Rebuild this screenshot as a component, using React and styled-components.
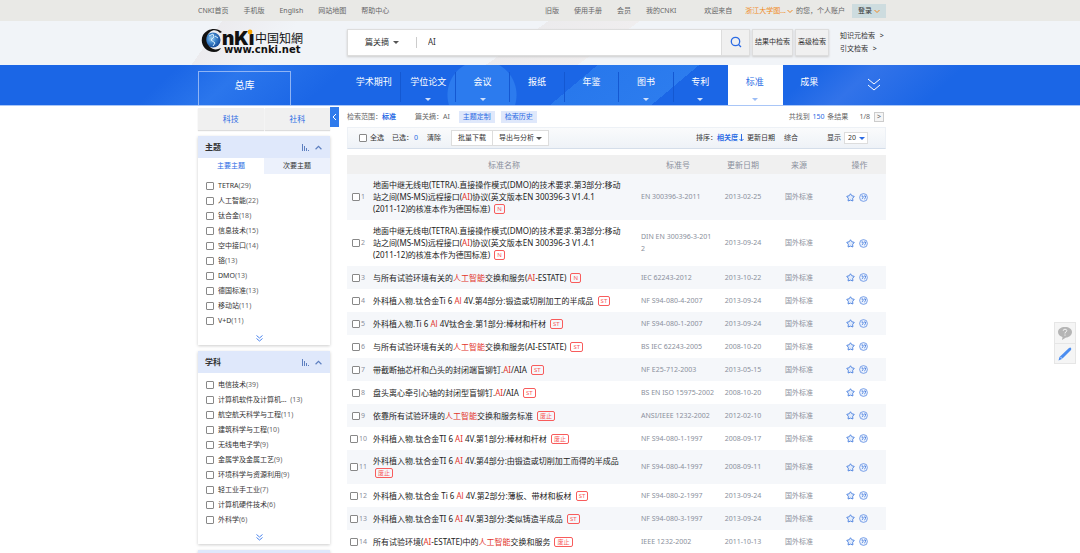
import { useState } from "react";
import styled, { createGlobalStyle } from "styled-components";

const colors = {
  blue: "#2b6be4",
  nav: "#1b66e6",
  red: "#e2342b",
  badge: "#f85c5c",
  text: "#333",
  gray: "#666",
  muted: "#8a8f9c",
  stripe: "#f5f7fa",
  panel: "#dfe8fb",
};

const themes = [
  ["TETRA", 29],
  ["人工智能", 22],
  ["钛合金", 18],
  ["信息技术", 15],
  ["空中接口", 14],
  ["铬", 13],
  ["DMO", 13],
  ["德国标准", 13],
  ["移动站", 11],
  ["V+D", 11],
];

const subjects = [
  ["电信技术", 39],
  ["计算机软件及计算机…  ", 13],
  ["航空航天科学与工程", 11],
  ["建筑科学与工程", 10],
  ["无线电电子学", 9],
  ["金属学及金属工艺", 9],
  ["环境科学与资源利用", 9],
  ["轻工业手工业", 7],
  ["计算机硬件技术", 6],
  ["外科学", 6],
];

const navItems = [
  { label: "学术期刊" },
  { label: "学位论文", arrow: true },
  { label: "会议", arrow: true },
  { label: "报纸" },
  { label: "年鉴" },
  { label: "图书", arrow: true },
  { label: "专利", arrow: true },
  { label: "标准", arrow: true, active: true },
  { label: "成果" },
];

// Parts wrapped in asterisks are the matched keywords
const results = [
  {
    title:
      "地面中继无线电(TETRA).直接操作模式(DMO)的技术要求.第3部分:移动站之间(MS-MS)远程接口(*AI*)协议(英文版本EN 300396-3 V1.4.1 (2011-12)的核准本作为德国标准)",
    tag: "N",
    code: "EN 300396-3-2011",
    date: "2013-02-25",
  },
  {
    title:
      "地面中继无线电(TETRA).直接操作模式(DMO)的技术要求.第3部分:移动站之间(MS-MS)远程接口(*AI*)协议(英文版本EN 300396-3 V1.4.1 (2011-12)的核准本作为德国标准)",
    tag: "N",
    code: "DIN EN 300396-3-2012",
    date: "2013-09-24",
  },
  {
    title: "与所有试验环境有关的*人工智能*交换和服务(*AI*-ESTATE)",
    tag: "N",
    code: "IEC 62243-2012",
    date: "2013-10-22",
  },
  {
    title: "外科植入物.钛合金Ti 6 *Al* 4V.第4部分:锻造或切削加工的半成品",
    tag: "ST",
    code: "NF S94-080-4-2007",
    date: "2013-09-24",
  },
  {
    title: "外科植入物.Ti 6 *Al* 4V钛合金.第1部分:棒材和杆材",
    tag: "ST",
    code: "NF S94-080-1-2007",
    date: "2013-09-24",
  },
  {
    title: "与所有试验环境有关的*人工智能*交换和服务(AI-ESTATE)",
    tag: "ST",
    code: "BS IEC 62243-2005",
    date: "2008-10-20",
  },
  {
    title: "带截断抽芯杆和凸头的封闭端盲铆钉.*AI*/AIA",
    tag: "ST",
    code: "NF E25-712-2003",
    date: "2013-05-15",
  },
  {
    title: "盘头离心牵引心轴的封闭型盲铆钉.*AI*/AIA",
    tag: "ST",
    code: "BS EN ISO 15975-2002",
    date: "2008-10-20",
  },
  {
    title: "依靠所有试验环境的*人工智能*交换和服务标准",
    tag: "废止",
    code: "ANSI/IEEE 1232-2002",
    date: "2012-02-10",
  },
  {
    title: "外科植入物.钛合金TI 6 *AI* 4V.第1部分:棒材和杆材",
    tag: "废止",
    code: "NF S94-080-1-1997",
    date: "2008-09-17",
  },
  {
    title: "外科植入物.钛合金TI 6 *AI* 4V.第4部分:由锻造或切削加工而得的半成品",
    tag: "废止",
    code: "NF S94-080-4-1997",
    date: "2008-09-11",
  },
  {
    title: "外科植入物.钛合金 Ti 6 *Al* 4V.第2部分:薄板、带材和板材",
    tag: "ST",
    code: "NF S94-080-2-1997",
    date: "2013-09-24",
  },
  {
    title: "外科植入物.钛合金TI 6 *AI* 4V.第3部分:类似铸造半成品",
    tag: "ST",
    code: "NF S94-080-3-1997",
    date: "2013-09-24",
  },
  {
    title: "所有试验环境(*AI*-ESTATE)中的*人工智能*交换和服务",
    tag: "废止",
    code: "IEEE 1232-2002",
    date: "2011-10-13",
  },
];

function Logo() {
  return (
    <svg width="106" height="28" viewBox="0 0 106 28" role="img" aria-label="中国知网">
      <defs>
        <radialGradient id="globe" cx="0.4" cy="0.4" r="0.6">
          <stop offset="0" stopColor="#9fd0f2" />
          <stop offset="0.5" stopColor="#3f86cc" />
          <stop offset="1" stopColor="#174d9c" />
        </radialGradient>
      </defs>
      <circle cx="13" cy="12" r="7.5" fill="url(#globe)" />
      <path d="M9 8l4-2 1 3-3 3 4 3-2 3M15 8l3 2" fill="none" stroke="#d7edfb" strokeWidth="1" />
      <path
        d="M22 4C17-1 7 0 3 7c-4 8 2 17 11 17 4 0 6-2 7-4-4 2-8 2-11-1-5-4-5-11 0-15 3-3 8-2 10 1z"
        fill="#111"
      />
      <text x="22" y="17" fontFamily="Inter, sans-serif" fontWeight="900" fontSize="19" fill="#111">
        nKı
      </text>
      <circle cx="50" cy="4" r="2.4" fill="#f7a400" />
      <text x="55" y="15" fontFamily="'Noto Sans CJK TC', sans-serif" fontSize="12" fill="#111">
        中国知網
      </text>
      <text x="24" y="25" fontFamily="'DejaVu Sans', sans-serif" fontWeight="700" fontSize="10" fill="#111">
        www.cnki.net
      </text>
    </svg>
  );
}

function Chevron({ up, size = 6, color = "currentColor" }) {
  return (
    <svg width={size} height={size} viewBox="0 0 6 6" fill="none" stroke={color}>
      <path d={up ? "M0.5 4.5L3 2l2.5 2.5" : "M0.5 2L3 4.5 5.5 2"} />
    </svg>
  );
}

function DoubleChevron({ width = 7, height = 7, stroke = 1.6 }) {
  return (
    <svg width={width} height={height} viewBox="0 0 14 14" fill="none" stroke="currentColor" strokeWidth={stroke}>
      <path d="M1 1l6 5 6-5M1 7l6 5 6-5" />
    </svg>
  );
}

function BarsIcon() {
  return (
    <svg width="8" height="7" viewBox="0 0 8 7" fill="#5d7fc0">
      <path d="M0 0h1v7H0zM2 2h1v5H2zM4 4h1v3H4zM6 6h1v1H6z" />
    </svg>
  );
}

function StarIcon() {
  return (
    <svg width="9" height="9" viewBox="0 0 18 18" fill="#e3ecfb" stroke="#4a80df" strokeWidth="1.8" strokeLinejoin="round">
      <path d="M9 1.5l2.6 4 4.9 1.2-3.1 3.9.3 5.4L9 14.2 4.3 16l.3-5.4L1.5 6.7l4.9-1.2z" />
    </svg>
  );
}

function QuoteIcon() {
  return (
    <svg width="9" height="9" viewBox="0 0 18 18" fill="#edf3fd" stroke="#4a80df">
      <circle cx="9" cy="9" r="7.8" strokeWidth="1.4" />
      <path d="M5 6h3v3q0 2-2.5 3M10 6h3v3q0 2-2.5 3" strokeWidth="1.8" />
    </svg>
  );
}

// Keeps a bracketed year and month such as (2011-12) on one line
function Title({ text }) {
  return text.split(/(\*[^*]+\*|\(\d{4}-\d{2}\))/).map((part, index) => {
    if (part.startsWith("*")) {
      return <Keyword key={index}>{part.slice(1, -1)}</Keyword>;
    }
    return index % 2 ? <NoWrap key={index}>{part}</NoWrap> : part;
  });
}

function FilterPanel({ title, items, tabs }) {
  return (
    <Panel>
      <PanelHeader>
        <h3>{title}</h3>
        <PanelTools>
          <IconButton aria-label="可视化">
            <BarsIcon />
          </IconButton>
          <IconButton aria-label="收起">
            <Chevron up size={7} color="#5d7fc0" />
          </IconButton>
        </PanelTools>
      </PanelHeader>
      {tabs && (
        <PanelTabs>
          <PanelTab $active>主要主题</PanelTab>
          <PanelTab>次要主题</PanelTab>
        </PanelTabs>
      )}
      <FilterList>
        {items.map(([name, count]) => (
          <li key={name}>
            <FilterLabel>
              <Checkbox type="checkbox" />
              <span>
                {name}
                <Count>({count})</Count>
              </span>
            </FilterLabel>
          </li>
        ))}
      </FilterList>
      <MoreButton aria-label="更多">
        <DoubleChevron stroke={2} />
      </MoreButton>
    </Panel>
  );
}

function App() {
  const [query, setQuery] = useState("AI");

  return (
    <Page>
      <GlobalStyle />
      <TopBar>
        <TopInner>
          <TopLinks>
            <a href="#home">CNKI首页</a>
            <a href="#mobile">手机版</a>
            <a href="#en">English</a>
            <a href="#map">网站地图</a>
            <a href="#help">帮助中心</a>
          </TopLinks>
          <TopLinks>
            <a href="#old">旧版</a>
            <a href="#manual">使用手册</a>
            <a href="#member">会员</a>
            <a href="#my">我的CNKI</a>
            <Welcome>
              <span>欢迎来自</span>
              <School href="#school">
                浙江大学图...
                <Chevron />
              </School>
              <span>的您，个人账户</span>
              <LoginButton>
                登录
                <Chevron color="#f08a24" />
              </LoginButton>
            </Welcome>
          </TopLinks>
        </TopInner>
      </TopBar>

      <Header>
        <HeaderInner>
          <LogoLink href="#home">
            <Logo />
          </LogoLink>
          <SearchBox>
            <FieldButton>
              篇关摘
              <Caret />
            </FieldButton>
            <SearchInput
              type="text"
              aria-label="检索词"
              value={query}
              onChange={(event) => setQuery(event.target.value)}
            />
            <SearchButton aria-label="检索">
              <svg width="12" height="12" viewBox="0 0 12 12" fill="none" stroke={colors.blue} strokeWidth="1.3">
                <circle cx="5.5" cy="5.5" r="4.2" />
                <path d="M8.5 8.5L11 11" />
              </svg>
            </SearchButton>
          </SearchBox>
          <HeaderButton>结果中检索</HeaderButton>
          <HeaderButton>高级检索</HeaderButton>
          <SideLinks>
            <a href="#knowledge">
              知识元检索 <span>&gt;</span>
            </a>
            <a href="#citation">
              引文检索 <span>&gt;</span>
            </a>
          </SideLinks>
        </HeaderInner>
      </Header>

      <Nav>
        <NavInner>
          <AllButton>总库</AllButton>
          <NavList>
            {navItems.map(({ label, arrow, active }) => (
              <NavItem key={label} href="#nav" $active={active}>
                {label}
                {arrow && <NavArrow $active={active} />}
              </NavItem>
            ))}
          </NavList>
          <NavMore aria-label="展开">
            <DoubleChevron width={14} height={14} stroke={1} />
          </NavMore>
        </NavInner>
      </Nav>

      <Main>
        <Sidebar>
          <Switches>
            <SwitchButton>科技</SwitchButton>
            <SwitchButton>社科</SwitchButton>
          </Switches>
          <FilterPanel title="主题" items={themes} tabs />
          <FilterPanel title="学科" items={subjects} />
          <Panel>
            <PanelHeader />
          </Panel>
        </Sidebar>
        <CollapseButton aria-label="收起侧栏">
          <svg width="5" height="8" viewBox="0 0 5 8" fill="none" stroke="#fff">
            <path d="M4 1L1 4l3 3" />
          </svg>
        </CollapseButton>

        <Content>
          <Summary>
            <span>
              检索范围：<Strong>标准</Strong>
            </span>
            <SummaryQuery>篇关摘：AI</SummaryQuery>
            <TagButton>主题定制</TagButton>
            <TagButton>检索历史</TagButton>
            <Total>
              共找到 <Blue>150</Blue> 条结果
            </Total>
            <span>1/8</span>
            <PageButton aria-label="下一页">&gt;</PageButton>
          </Summary>

          <Toolbar>
            <ToolGroup>
              <SelectAll>
                <Checkbox type="checkbox" />
                全选
              </SelectAll>
              <span>
                已选：<Blue>0</Blue>
              </span>
              <PlainButton>清除</PlainButton>
            </ToolGroup>
            <ButtonGroup>
              <ToolButton>批量下载</ToolButton>
              <ToolButton>
                导出与分析
                <Caret />
              </ToolButton>
            </ButtonGroup>
            <SortGroup>
              <span>排序：</span>
              <PlainButton $active>
                相关度
                <svg width="5" height="8" viewBox="0 0 5 8" fill="none" stroke="currentColor">
                  <path d="M2.5 0v7M0.5 5l2 2 2-2" />
                </svg>
              </PlainButton>
              <PlainButton>更新日期</PlainButton>
              <LastSort>综合</LastSort>
            </SortGroup>
            <PageSize>
              显示
              <SelectWrap>
                <select defaultValue="20">
                  <option>10</option>
                  <option>20</option>
                  <option>50</option>
                </select>
                <Caret $color={colors.blue} />
              </SelectWrap>
            </PageSize>
          </Toolbar>

          <Table>
            <colgroup>
              <col width="26" />
              <col />
              <col width="86" />
              <col width="44" />
              <col width="68" />
              <col width="53" />
            </colgroup>
            <thead>
              <tr>
                <th aria-label="序号" />
                <th>标准名称</th>
                <th>标准号</th>
                <th>更新日期</th>
                <th>来源</th>
                <th>操作</th>
              </tr>
            </thead>
            <tbody>
              {results.map((row, index) => (
                <tr key={index}>
                  <td>
                    <RowLabel>
                      <Checkbox type="checkbox" />
                      {index + 1}
                    </RowLabel>
                  </td>
                  <TitleCell>
                    <a href="#detail">
                      <Title text={row.title} />
                    </a>{" "}
                    <Badge>{row.tag}</Badge>
                  </TitleCell>
                  <CodeCell>{row.code}</CodeCell>
                  <td>{row.date}</td>
                  <td>国外标准</td>
                  <td>
                    <Actions>
                      <IconButton aria-label="收藏">
                        <StarIcon />
                      </IconButton>
                      <IconButton aria-label="引用">
                        <QuoteIcon />
                      </IconButton>
                    </Actions>
                  </td>
                </tr>
              ))}
            </tbody>
          </Table>
        </Content>
      </Main>

      <Floating>
        <FloatButton aria-label="帮助">
          <svg width="14" height="13" viewBox="0 0 14 13" fill="#b5b5b5">
            <path d="M7 0c4 0 7 2 7 5s-3 5.5-6 5.5L4 13l.5-3C2 9.5 0 7.5 0 5c0-3 3-5 7-5z" />
            <path d="M5.2 3.8q0-1.6 1.8-1.6t1.8 1.5q0 1-1.8 2v.8M7 7.5v1.2" fill="none" stroke="#f4f4f4" />
          </svg>
        </FloatButton>
        <FloatButton aria-label="反馈">
          <svg width="14" height="14" viewBox="0 0 14 14" fill="#4b8df0">
            <path d="M0.5 13.5l1-3.5L11 1q1.5-1 2 0t0 2L4 12z" />
            <path d="M2.5 10l2 2" stroke="#fff" strokeWidth="0.7" />
          </svg>
        </FloatButton>
      </Floating>
    </Page>
  );
}

const GlobalStyle = createGlobalStyle`
  * {
    box-sizing: border-box;
  }

  body {
    margin: 0;
    background: #fff;
    color: ${colors.text};
    font-family: "Noto Sans", "Noto Sans CJK SC", sans-serif;
    font-size: 7px;
    line-height: 12px;
  }

  a {
    color: inherit;
    text-decoration: none;
  }

  button, input, select {
    margin: 0;
    padding: 0;
    border: 0;
    background: none;
    color: inherit;
    font: inherit;
  }

  svg {
    display: block;
  }
`;

const Page = styled.div`
  height: 100vh;
  overflow: hidden;
`;

const Container = styled.div`
  display: flex;
  max-width: 692px;
  margin: 0 auto;
  padding-left: 4px;
`;

const TopBar = styled.div`
  background: #e9e9e6;
  color: ${colors.gray};
`;

const TopInner = styled(Container)`
  align-items: center;
  justify-content: space-between;
  height: 21px;
`;

const TopLinks = styled.div`
  display: flex;
  align-items: center;
  gap: 15px;
`;

const Welcome = styled.div`
  display: flex;
  align-items: center;
  gap: 3px;
  margin-left: 13px;
`;

const School = styled.a`
  display: flex;
  align-items: center;
  gap: 1px;
  margin-left: 10px;
  color: #f08a24;
`;

const LoginButton = styled.button`
  display: flex;
  align-items: center;
  justify-content: center;
  gap: 2px;
  width: 34px;
  height: 14px;
  margin-left: 4px;
  background: #cddcdf;
  color: ${colors.text};
`;

const Header = styled.header`
  background:
    linear-gradient(125deg, transparent 20%, #ecebee 20%, #f1f4f8 27%, transparent 27%),
    linear-gradient(145deg, transparent 48%, #ecebed 48%, #f0eeef 56%, transparent 56%),
    #f1f4f8;
`;

const HeaderInner = styled(Container)`
  align-items: center;
  height: 44px;
  padding-bottom: 2px;
`;

const LogoLink = styled.a`
  flex: 0 0 149px;
  padding-left: 2px;
`;

const SearchBox = styled.div`
  display: flex;
  flex: 0 1 403px;
  height: 27px;
  margin-right: 2px;
  border: 1px solid #ddd;
  background: #fff;
  box-shadow: 0 1px 2px #ccc;
`;

const FieldButton = styled.button`
  display: flex;
  align-items: center;
  justify-content: center;
  gap: 4px;
  width: 69px;
  margin: 7px 0;
  border-right: 1px solid #ccc;
  font-size: 8px;
`;

const Caret = styled.i`
  border: 3px solid transparent;
  border-top-color: ${({ $color }) => $color || "#555"};
  border-bottom: 0;
`;

const SearchInput = styled.input`
  flex: 1;
  min-width: 0;
  padding-left: 11px;
  font-size: 8px;
  outline: 0;
`;

const SearchButton = styled.button`
  display: flex;
  align-items: center;
  justify-content: center;
  width: 28px;
  border-left: 1px solid #ddd;
  background: #f0f0f0;
`;

const HeaderButton = styled.button`
  height: 27px;
  margin-right: 2px;
  padding: 0 2px;
  border: 1px solid #ddd;
  background: #f0f0f0;
  box-shadow: 0 1px 2px #ccc;
  white-space: nowrap;
`;

const SideLinks = styled.div`
  display: flex;
  flex-direction: column;
  gap: 1px;
  margin-left: 9px;
  white-space: nowrap;

  span {
    margin-left: 3px;
  }
`;

const Nav = styled.nav`
  border-bottom: 1px solid #a9c6f7;
  background:
    radial-gradient(circle at 482px 30px, #2c7bee 34px, transparent 35px),
    linear-gradient(138deg, transparent 16%, #2b76ec 22%, transparent 31%),
    linear-gradient(140deg, transparent 53%, #2878ec 53%, #2c7cee 62%, transparent 62%),
    linear-gradient(138deg, transparent 73%, #3273e9 78%, transparent 86%),
    ${colors.nav};
  color: #fff;
`;

const NavInner = styled(Container)`
  height: 40px;
`;

const AllButton = styled.button`
  flex: 0 0 93px;
  margin: 6px 56px 0 0;
  padding-bottom: 8px;
  border: 1px solid #8fb4f5;
  border-bottom: 0;
  font-size: 10px;
`;

const NavList = styled.div`
  display: flex;
  flex: 1;
`;

const NavItem = styled.a`
  display: flex;
  flex: 1;
  flex-direction: column;
  align-items: center;
  gap: 10px;
  padding-top: 11px;
  border-right: 1px solid transparent;
  border-image: linear-gradient(transparent 20%, #1458d2 20%, #1458d2 90%, transparent 90%) 1;
  background: ${({ $active }) => ($active ? "#fff" : "none")};
  color: ${({ $active }) => ($active ? colors.blue : "#fff")};
  font-size: 9px;
  white-space: nowrap;

  &:nth-child(n + 7) {
    border-image: none;
  }
`;

const NavArrow = styled.i`
  border: 3px solid transparent;
  border-top-color: ${({ $active }) => ($active ? "#9bbcf5" : "#cfe0fc")};
  border-bottom: 0;
`;

const NavMore = styled.button`
  display: flex;
  align-items: center;
  justify-content: center;
  flex: 0 0 49px;
  padding-left: 25px;
`;

const Main = styled(Container)`
  align-items: flex-start;
  padding-top: 1px;
`;

const Sidebar = styled.aside`
  display: flex;
  flex: 0 0 132px;
  flex-direction: column;
  gap: 6px;
`;

const Switches = styled.div`
  display: flex;
  gap: 1px;
  padding-top: 1px;
`;

const SwitchButton = styled.button`
  flex: 1;
  height: 22px;
  background: #f0f0f0;
  box-shadow: 0 1px 1px #ddd;
  color: ${colors.blue};
  font-size: 8px;
`;

const Panel = styled.section`
  background: #fff;
  box-shadow: 0 1px 3px #ccc;
`;

const PanelHeader = styled.div`
  display: flex;
  align-items: center;
  justify-content: space-between;
  height: 22px;
  padding: 0 8px 0 7px;
  background: ${colors.panel};

  h3 {
    margin: 0;
    font-size: 8px;
  }
`;

const PanelTools = styled.div`
  display: flex;
  align-items: center;
  gap: 5px;
`;

const IconButton = styled.button`
  display: block;
`;

const PanelTabs = styled.div`
  display: flex;
`;

const PanelTab = styled.button`
  flex: 1;
  height: 16px;
  background: ${({ $active }) => ($active ? "#fff" : "#ecf1fc")};
  color: ${({ $active }) => ($active ? colors.blue : colors.text)};
`;

const FilterList = styled.ul`
  margin: 0;
  padding: 4px 8px 0;
  list-style: none;
`;

const FilterLabel = styled.label`
  display: flex;
  align-items: center;
  gap: 4px;
  height: 15px;
  white-space: pre;
`;

const Checkbox = styled.input`
  flex: none;
  width: 8px;
  height: 8px;
  border: 1px solid #888;
  border-radius: 1px;
  background: #fff;
  appearance: none;

  &:checked {
    background: ${colors.blue};
  }
`;

const Count = styled.span`
  color: ${colors.gray};
`;

const MoreButton = styled.button`
  display: flex;
  align-items: center;
  justify-content: center;
  width: 100%;
  height: 17px;
  padding: 3px 9px 0 0;
  color: #4b85ee;
`;

const CollapseButton = styled.button`
  display: flex;
  align-items: center;
  justify-content: center;
  flex: 0 0 9px;
  height: 20px;
  margin-right: 8px;
  background: #2f7bec;
`;

const Content = styled.main`
  flex: 1;
  min-width: 0;
`;

const Summary = styled.div`
  display: flex;
  align-items: center;
  height: 20px;
  color: ${colors.gray};
`;

const Strong = styled.b`
  color: ${colors.blue};
`;

const Blue = styled.span`
  margin: 0 1px;
  color: ${colors.blue};
`;

const SummaryQuery = styled.span`
  margin: 0 9px 0 19px;
`;

const TagButton = styled.button`
  height: 12px;
  margin-right: 6px;
  padding: 0 4px;
  background: ${colors.panel};
  color: ${colors.blue};
`;

const Total = styled.span`
  margin: 0 11px 0 auto;
`;

const PageButton = styled.button`
  width: 10px;
  height: 10px;
  margin: 0 2px 0 4px;
  border: 1px solid #ccc;
  background: #f5f5f5;
  line-height: 8px;
`;

const Toolbar = styled.div`
  display: flex;
  align-items: center;
  height: 22px;
  margin-bottom: 6px;
  border: 1px solid #edf1f6;
  border-bottom-color: #d5deea;
  background: linear-gradient(#fafbfc, #eef2f7);
`;

const ToolGroup = styled.div`
  display: flex;
  align-items: center;
  gap: 8px;
  margin-left: 11px;
`;

const SelectAll = styled.label`
  display: flex;
  align-items: center;
  gap: 3px;
`;

const PlainButton = styled.button`
  display: flex;
  align-items: center;
  gap: 1px;
  color: ${({ $active }) => ($active ? colors.blue : colors.text)};
  font-weight: ${({ $active }) => ($active ? 700 : 400)};
`;

const ButtonGroup = styled.div`
  display: flex;
  margin-left: 10px;
`;

const ToolButton = styled.button`
  display: flex;
  align-items: center;
  gap: 2px;
  height: 16px;
  padding: 0 6px;
  border: 1px solid #ddd;
  background: #fff;

  & + & {
    margin-left: -1px;
  }
`;

const SortGroup = styled.div`
  display: flex;
  align-items: center;
  gap: 3px;
  margin-left: auto;

  span {
    margin-right: -3px;
  }
`;

const LastSort = styled(PlainButton)`
  margin-left: 6px;
`;

const PageSize = styled.label`
  display: flex;
  align-items: center;
  gap: 3px;
  margin: 0 17px 0 29px;
`;

const SelectWrap = styled.span`
  display: flex;
  align-items: center;
  width: 24px;
  height: 12px;
  border: 1px solid #ddd;
  background: #fff;

  select {
    width: 14px;
    padding-left: 3px;
    appearance: none;
  }
`;

const Table = styled.table`
  width: 100%;
  border-collapse: collapse;
  table-layout: fixed;

  th {
    height: 19px;
    padding: 0;
    background: #f0f0f0;
    color: ${colors.muted};
    font-size: 8px;
    font-weight: 400;
    white-space: nowrap;
  }

  td {
    height: 23px;
    padding: 5px 0;
    color: ${colors.muted};
    text-align: center;
  }

  tbody tr:nth-child(odd) {
    background: ${colors.stripe};
  }
`;

const RowLabel = styled.label`
  display: flex;
  align-items: center;
  justify-content: center;
  gap: 1px;
  padding-right: 3px;
`;

const TitleCell = styled.td`
  && {
    padding-right: 12px;
    color: #222;
    font-size: 8px;
    text-align: left;
  }
`;

const Keyword = styled.span`
  color: ${colors.red};
`;

const NoWrap = styled.span`
  white-space: nowrap;
`;

const Badge = styled.span`
  display: inline-block;
  height: 10px;
  margin: 1px 0 0 2px;
  padding: 0 2px;
  border: 1px solid ${colors.badge};
  border-radius: 2px;
  color: ${colors.badge};
  font-size: 6px;
  line-height: 8px;
  vertical-align: top;
`;

const CodeCell = styled.td`
  && {
    padding: 5px 6px;
    text-align: left;
    word-break: break-all;
  }
`;

const Actions = styled.div`
  display: flex;
  justify-content: center;
  gap: 4px;
  padding-right: 5px;
`;

const Floating = styled.div`
  position: fixed;
  top: 322px;
  right: 4px;
  border: 1px solid #e6e6e6;
  background: #f5f5f5;
`;

const FloatButton = styled.button`
  display: flex;
  align-items: center;
  justify-content: center;
  width: 20px;
  height: 20px;

  & + & {
    border-top: 1px solid #e6e6e6;
  }
`;

export default App;
